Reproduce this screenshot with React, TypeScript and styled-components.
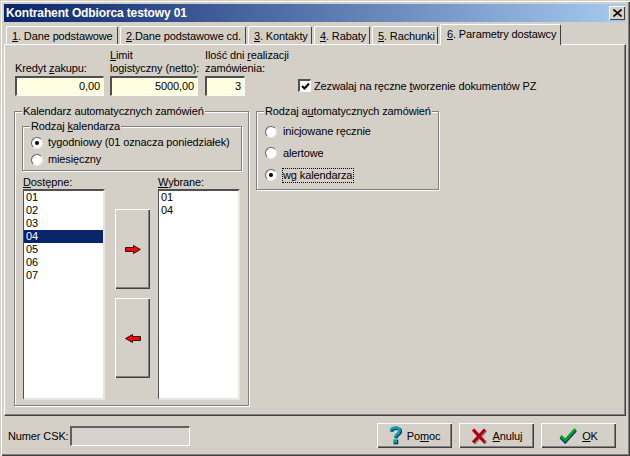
import styled, { createGlobalStyle } from "styled-components";

const GlobalStyle = createGlobalStyle`
  html, body { margin: 0; padding: 0; background: #d4d0c8; }
  body { font-family: "Liberation Sans", Arial, sans-serif; font-size: 11px; letter-spacing: -0.12px; color: #000; }
`;

const Win = styled.div`
  width: 630px;
  height: 456px;
  box-sizing: border-box;
  padding: 4px;
  background: #d4d0c8;
  display: flex;
  flex-direction: column;
  overflow: hidden;
  box-shadow: inset 1px 1px 0 #d4d0c8, inset 2px 2px 0 #fff, inset -1px -1px 0 #404040, inset -2px -2px 0 #808080;
`;
const TitleBar = styled.div`
  height: 18px;
  flex: none;
  display: flex;
  align-items: center;
  justify-content: space-between;
  padding: 0 1px 0 2px;
  background: linear-gradient(90deg, #0a246a, #a6caf0);
  color: #fff;
  font-weight: bold;
  font-size: 12px;
  letter-spacing: -0.13px;
`;
const CloseBtn = styled.div`
  width: 16px;
  height: 14px;
  background: #d4d0c8;
  display: flex;
  align-items: center;
  justify-content: center;
  box-shadow: inset 1px 1px 0 #fff, inset -1px -1px 0 #404040;
`;
const TabStrip = styled.div`
  height: 21px;
  flex: none;
  margin-top: 1px;
  padding-left: 2px;
  display: flex;
  align-items: flex-end;
  position: relative;
  z-index: 1;
`;
const Tab = styled.div<{ $w: number; $active?: boolean }>`
  width: ${(p) => p.$w}px;
  height: ${(p) => (p.$active ? 21 : 18)}px;
  margin-right: ${(p) => (p.$active ? 0 : 2)}px;
  margin-bottom: ${(p) => (p.$active ? -1 : 0)}px;
  box-sizing: border-box;
  padding: ${(p) => (p.$active ? "1px 0 0 6px" : "1px 0 0 5px")};
  background: #d4d0c8;
  line-height: 17px;
  white-space: nowrap;
  border-left: 1px solid #fff;
  border-top: 1px solid #fff;
  border-right: 1px solid #404040;
  border-radius: 2px 2px 0 0;
`;
const Panel = styled.div`
  height: 372px;
  flex: none;
  box-sizing: border-box;
  padding: 4px 0 0 9px;
  border-top: 1px solid #fff;
  border-left: 1px solid #fff;
  border-right: 1px solid #404040;
  border-bottom: 1px solid #404040;
  box-shadow: inset -1px -1px 0 #808080;
`;
const FieldRow = styled.div`
  display: flex;
  align-items: flex-end;
  padding-left: 1px;
`;
const Field = styled.div<{ $w: number; $mr: number }>`
  width: ${(p) => p.$w}px;
  margin-right: ${(p) => p.$mr}px;
  display: flex;
  flex-direction: column;
  gap: 1px;
`;
const FieldLabel = styled.div`
  line-height: 13px;
  white-space: nowrap;
`;
const MoneyInput = styled.div`
  height: 20px;
  box-sizing: border-box;
  padding-right: 3px;
  background: #ffffe1;
  text-align: right;
  line-height: 17px;
  border-style: solid;
  border-width: 2px 1px 1px 2px;
  border-color: #505050 #fff #fff #505050;
`;
const CheckRow = styled.div`
  margin: 0 0 4px 53px;
  display: flex;
  align-items: center;
  gap: 3px;
  white-space: nowrap;
`;
const CheckBox = styled.div`
  width: 13px;
  height: 13px;
  box-sizing: border-box;
  background: #fff;
  display: flex;
  align-items: center;
  justify-content: center;
  border-style: solid;
  border-width: 2px 1px 1px 2px;
  border-color: #505050 #fff #fff #505050;
`;
const MainRow = styled.div`
  margin-top: 15px;
  display: flex;
  align-items: flex-start;
  gap: 7px;
`;
const GroupBox = styled.div<{ $w: number; $h: number }>`
  width: ${(p) => p.$w}px;
  height: ${(p) => p.$h}px;
  box-sizing: border-box;
  position: relative;
  border: 1px solid #808080;
  box-shadow: 1px 1px 0 #fff, inset 1px 1px 0 #fff;
`;
const GroupTitle = styled.div`
  position: absolute;
  top: -7px;
  left: 7px;
  padding: 0 1px;
  background: #d4d0c8;
  line-height: 13px;
  white-space: nowrap;
`;
const CalendarBody = styled.div`
  padding: 14px 0 0 7px;
`;
const KindBody = styled.div`
  padding: 7px 0 0 8px;
`;
const ModeBody = styled.div`
  padding: 9px 0 0 8px;
`;
const RadioRow = styled.div<{ $h: number; $gap: number }>`
  height: ${(p) => p.$h}px;
  display: flex;
  align-items: center;
  gap: ${(p) => p.$gap}px;
  white-space: nowrap;
`;
const Radio = styled.div<{ $on?: boolean }>`
  width: 12px;
  height: 12px;
  flex: none;
  box-sizing: border-box;
  border-radius: 50%;
  background: #fff;
  display: flex;
  align-items: center;
  justify-content: center;
  border: 1px solid;
  border-color: #606060 #e8e6e0 #e8e6e0 #606060;
  box-shadow: 0 0 0 0.5px #d4d0c8;
  &::after {
    content: "";
    width: 4px;
    height: 4px;
    border-radius: 50%;
    background: ${(p) => (p.$on ? "#000" : "transparent")};
  }
`;
const RadioText = styled.span<{ $focus?: boolean }>`
  line-height: 13px;
  outline: ${(p) => (p.$focus ? "1px dotted #000" : "none")};
  outline-offset: 0;
  padding: ${(p) => (p.$focus ? "0 1px 0 0" : "0")};
`;
const ListsRow = styled.div`
  margin: 5px 0 0 1px;
  display: flex;
  align-items: flex-start;
`;
const ListColumn = styled.div`
  width: 82px;
  flex: none;
  display: flex;
  flex-direction: column;
`;
const ListBox = styled.div`
  height: 211px;
  box-sizing: border-box;
  background: #fff;
  border-style: solid;
  border-width: 2px 2px 2px 1px;
  border-color: #505050 #e8e6e0 #e8e6e0 #505050;
  padding-right: 0;
`;
const ListItem = styled.div<{ $sel?: boolean }>`
  height: 13px;
  line-height: 13px;
  padding-left: 2px;
  background: ${(p) => (p.$sel ? "#0a246a" : "transparent")};
  color: ${(p) => (p.$sel ? "#fff" : "#000")};
`;
const MoveColumn = styled.div`
  width: 35px;
  flex: none;
  margin: 33px 8px 0 10px;
  display: flex;
  flex-direction: column;
  gap: 9px;
`;
const MoveButton = styled.div`
  height: 80px;
  background: #d4d0c8;
  display: flex;
  align-items: center;
  justify-content: center;
  box-shadow: inset 1px 1px 0 #fff, inset -1px -1px 0 #404040, inset -2px -2px 0 #808080;
`;
const BottomBar = styled.div`
  flex: 1;
  display: flex;
  align-items: center;
  padding: 3px 10px 0 4px;
`;
const CskLabel = styled.span`
  width: 62px;
  flex: none;
  white-space: nowrap;
`;
const CskInput = styled.div`
  width: 120px;
  height: 20px;
  box-sizing: border-box;
  margin-top: 1px;
  background: #d8d2cc;
  border-style: solid;
  border-width: 2px 1px 1px 2px;
  border-color: #606060 #fff #fff #606060;
`;
const ActionGroup = styled.div`
  margin-left: auto;
  display: flex;
  gap: 7px;
`;
const ActionButton = styled.div`
  width: 75px;
  height: 25px;
  background: #d4d0c8;
  display: flex;
  align-items: center;
  justify-content: center;
  gap: 5px;
  box-shadow: inset 1px 1px 0 #fff, inset -1px -1px 0 #404040, inset -2px -2px 0 #808080;
`;
const U = styled.span`
  text-decoration: underline;
`;

const RightArrow = () => (
  <svg width="16" height="9" viewBox="0 0 16 9">
    <path d="M.5 2.5H8.5V.5L15.5 4.5 8.5 8.5V6.5H.5Z" fill="#ff0000" stroke="#000" strokeWidth=".8" />
  </svg>
);
const LeftArrow = () => (
  <svg width="16" height="9" viewBox="0 0 16 9">
    <path d="M15.5 2.5H7.5V.5L.5 4.5 7.5 8.5V6.5H15.5Z" fill="#ff0000" stroke="#000" strokeWidth=".8" />
  </svg>
);
const HelpIcon = () => (
  <svg width="13" height="21" viewBox="0 0 14 21">
    <path d="M3 6.5C3 2 12.5 1.5 12.5 6C12.5 9.5 8 9.5 7.5 13.5" fill="none" stroke="#003c64" strokeWidth="3.4" />
    <path d="M2.2 5.5C2.2 1 11.5.5 11.5 5C11.5 8.5 7 8.5 6.5 12.5" fill="none" stroke="#00a4b4" strokeWidth="2.8" />
    <rect x="5" y="15" width="5" height="5" fill="#003c64" />
    <rect x="5" y="15" width="3.5" height="3.5" fill="#00a4b4" />
  </svg>
);
const CancelIcon = () => (
  <svg width="17" height="18" viewBox="0 0 17 18">
    <path d="M3 3.5L15 16.5M15 3.5L3 16.5" stroke="#8a8a8a" strokeWidth="3.2" />
    <path d="M2 2.5L14 15.5M14 2.5L2 15.5" stroke="#b00010" strokeWidth="3.2" />
  </svg>
);
const OkIcon = () => (
  <svg width="18" height="16" viewBox="0 0 18 16">
    <path d="M1.8 9L6.2 13.5 16.5 2" fill="none" stroke="#102a80" strokeWidth="3.6" />
    <path d="M1.8 8L6.2 12.4 16.5 1" fill="none" stroke="#00a818" strokeWidth="2.6" />
  </svg>
);

const days = ["01", "02", "03", "04", "05", "06", "07"];

export default function App() {
  return (
    <Win>
      <GlobalStyle />
      <TitleBar>
        <span>Kontrahent Odbiorca testowy 01</span>
        <CloseBtn>
          <svg width="9" height="8" viewBox="0 0 9 8">
            <path d="M.5 .5L8.5 7.5M8.5 .5L.5 7.5" stroke="#000" strokeWidth="1.6" />
          </svg>
        </CloseBtn>
      </TitleBar>
      <TabStrip>
        <Tab $w={112}><U>1</U>. Dane podstawowe</Tab>
        <Tab $w={126}><U>2</U>.Dane podstawowe cd.</Tab>
        <Tab $w={64}><U>3</U>. Kontakty</Tab>
        <Tab $w={56}><U>4</U>. Rabaty</Tab>
        <Tab $w={66}><U>5</U>. Rachunki</Tab>
        <Tab $w={121} $active><U>6</U>. Parametry dostawcy</Tab>
      </TabStrip>
      <Panel>
        <FieldRow>
          <Field $w={89} $mr={6}>
            <FieldLabel>Kredyt <U>z</U>akupu:</FieldLabel>
            <MoneyInput>0,00</MoneyInput>
          </Field>
          <Field $w={88} $mr={7}>
            <FieldLabel><U>L</U>imit<br />logistyczny (netto):</FieldLabel>
            <MoneyInput>5000,00</MoneyInput>
          </Field>
          <Field $w={40} $mr={0}>
            <FieldLabel>Ilość dni <U>r</U>ealizacji<br />zamówienia:</FieldLabel>
            <MoneyInput>3</MoneyInput>
          </Field>
          <CheckRow>
            <CheckBox>
              <svg width="9" height="9" viewBox="0 0 9 9">
                <path d="M1 4L3.5 6.5 8 1.5" fill="none" stroke="#000" strokeWidth="2" />
              </svg>
            </CheckBox>
            <span>Zezwalaj na ręczne <U>t</U>worzenie dokumentów PZ</span>
          </CheckRow>
        </FieldRow>
        <MainRow>
          <GroupBox $w={235} $h={295}>
            <GroupTitle>Kalendarz automatycznych zamówień</GroupTitle>
            <CalendarBody>
              <GroupBox $w={220} $h={45}>
                <GroupTitle>Rodzaj <U>k</U>alendarza</GroupTitle>
                <KindBody>
                  <RadioRow $h={17} $gap={5}>
                    <Radio $on />
                    <RadioText>tygodniowy (01 oznacza poniedziałek)</RadioText>
                  </RadioRow>
                  <RadioRow $h={17} $gap={5}>
                    <Radio />
                    <RadioText>miesięczny</RadioText>
                  </RadioRow>
                </KindBody>
              </GroupBox>
              <ListsRow>
                <ListColumn>
                  <FieldLabel><U>D</U>ostępne:</FieldLabel>
                  <ListBox>
                    {days.map((d) => (
                      <ListItem key={d} $sel={d === "04"}>{d}</ListItem>
                    ))}
                  </ListBox>
                </ListColumn>
                <MoveColumn>
                  <MoveButton><RightArrow /></MoveButton>
                  <MoveButton><LeftArrow /></MoveButton>
                </MoveColumn>
                <ListColumn>
                  <FieldLabel><U>W</U>ybrane:</FieldLabel>
                  <ListBox>
                    <ListItem>01</ListItem>
                    <ListItem>04</ListItem>
                  </ListBox>
                </ListColumn>
              </ListsRow>
            </CalendarBody>
          </GroupBox>
          <GroupBox $w={183} $h={79}>
            <GroupTitle>Rodzaj a<U>u</U>tomatycznych zamówień</GroupTitle>
            <ModeBody>
              <RadioRow $h={21} $gap={6}>
                <Radio />
                <RadioText>inicjowane ręcznie</RadioText>
              </RadioRow>
              <RadioRow $h={22} $gap={6}>
                <Radio />
                <RadioText>alertowe</RadioText>
              </RadioRow>
              <RadioRow $h={22} $gap={6}>
                <Radio $on />
                <RadioText $focus>wg kalendarza</RadioText>
              </RadioRow>
            </ModeBody>
          </GroupBox>
        </MainRow>
      </Panel>
      <BottomBar>
        <CskLabel>Numer CSK:</CskLabel>
        <CskInput />
        <ActionGroup>
          <ActionButton><HelpIcon /><span>Po<U>m</U>oc</span></ActionButton>
          <ActionButton><CancelIcon /><span><U>A</U>nuluj</span></ActionButton>
          <ActionButton><OkIcon /><span><U>O</U>K</span></ActionButton>
        </ActionGroup>
      </BottomBar>
    </Win>
  );
}
